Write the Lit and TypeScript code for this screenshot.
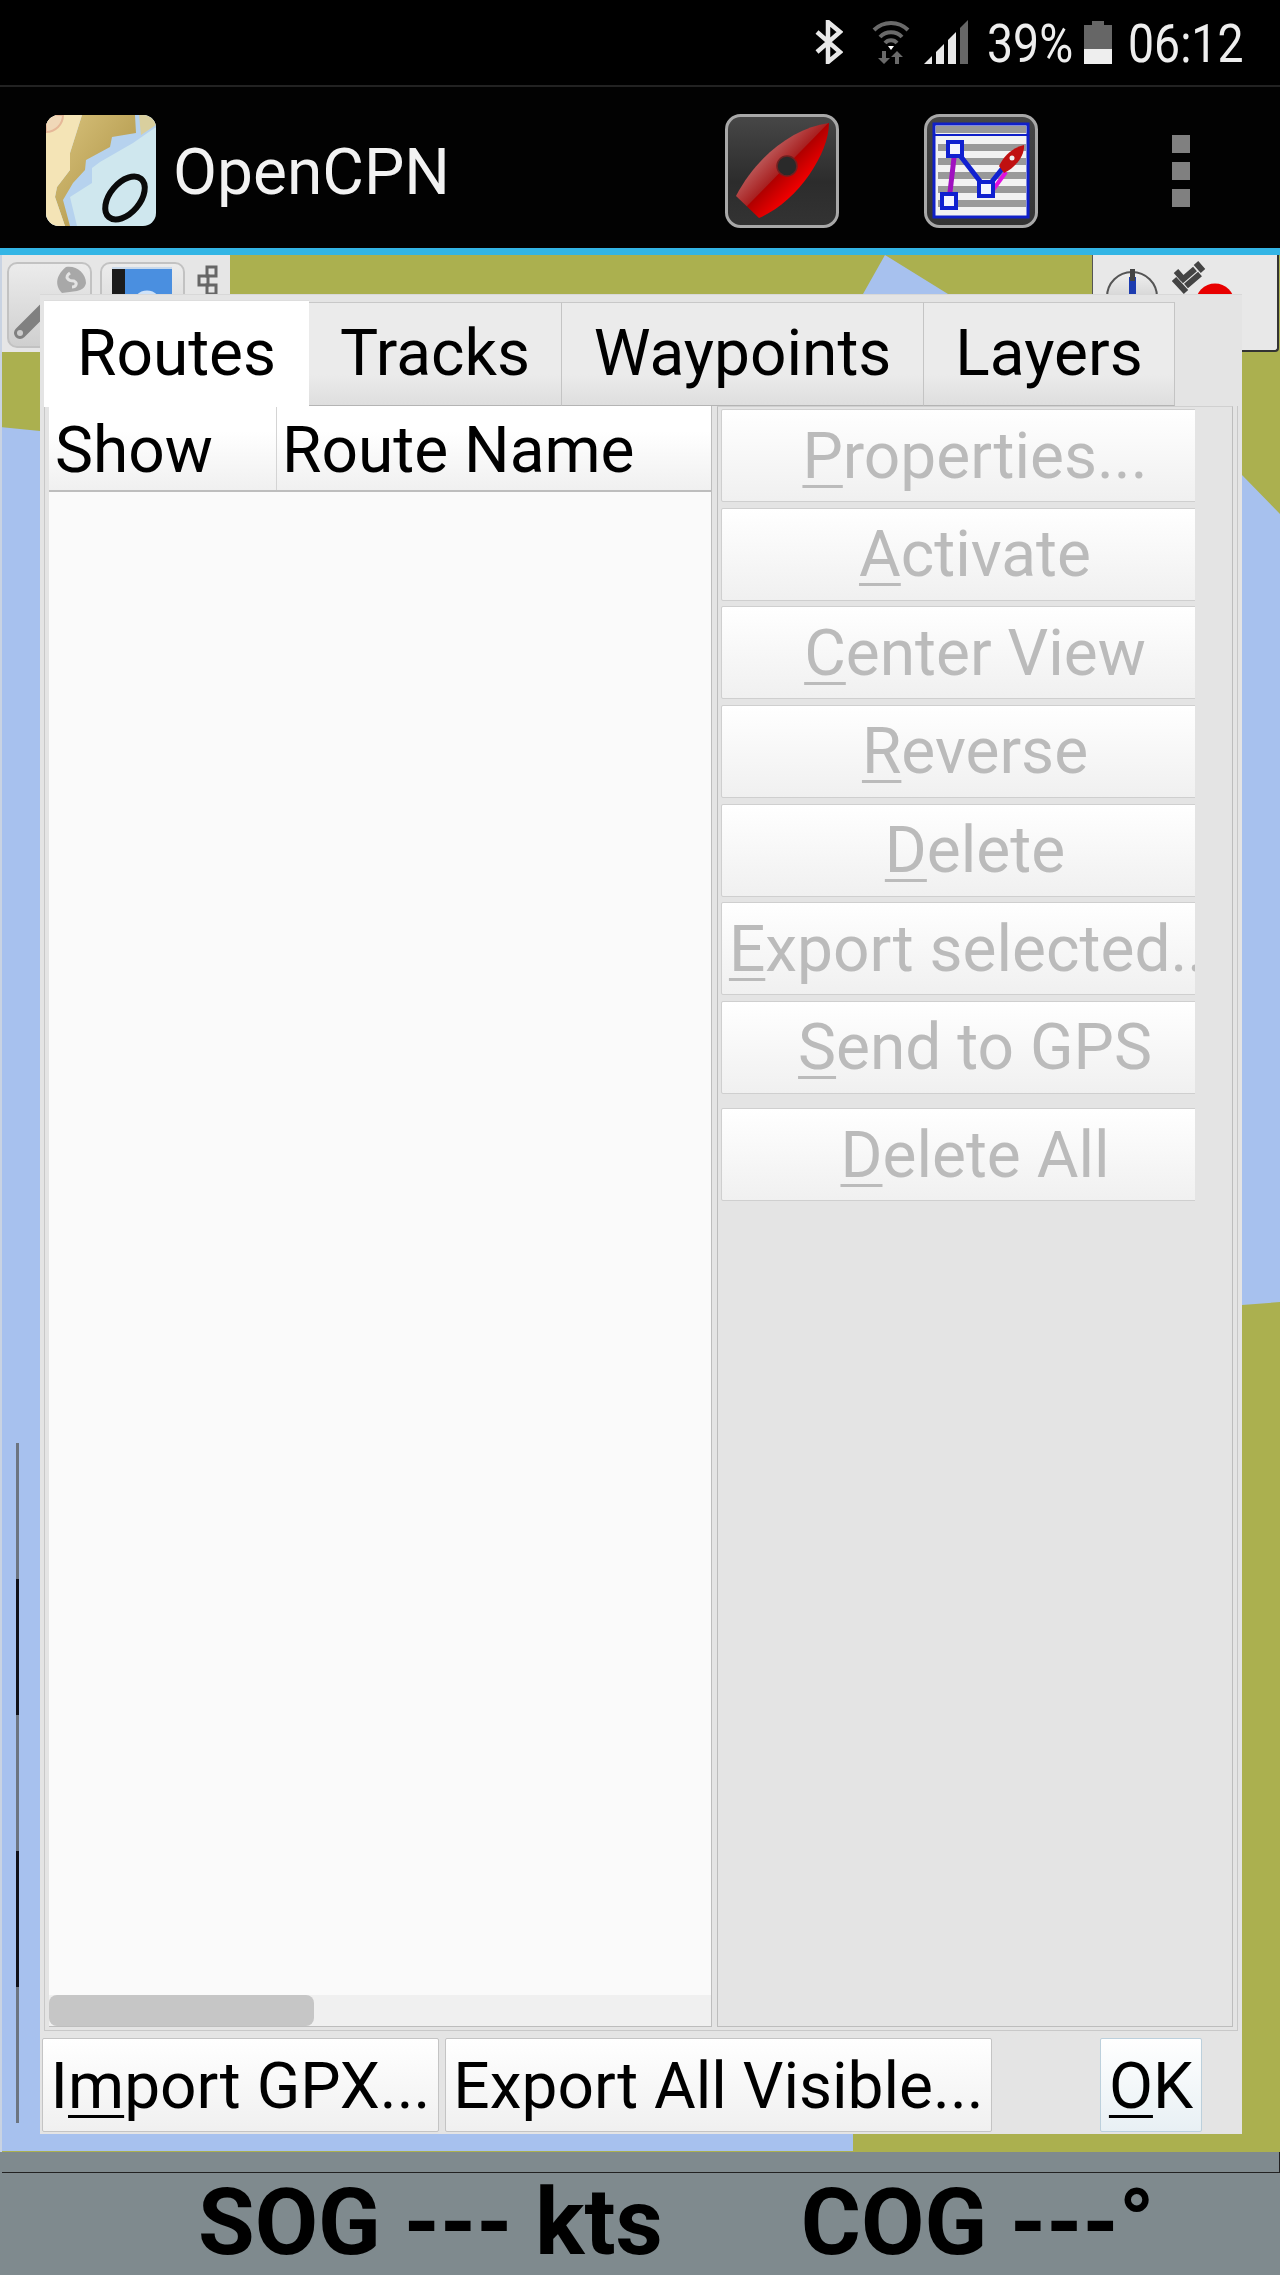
import { LitElement, html, svg, css } from "lit";
import { customElement } from "lit/decorators.js";

const sideButtons: [string, string][] = [
  ["P", "roperties..."],
  ["A", "ctivate"],
  ["C", "enter View"],
  ["R", "everse"],
  ["D", "elete"],
  ["E", "xport selected..."],
  ["S", "end to GPS"],
  ["D", "elete All"],
];

const stripes = [30, 44, 58, 72, 86];

@customElement("app-root")
export class AppRoot extends LitElement {
  static styles = css`
    :host { display: block; font-family: Roboto, "Liberation Sans", sans-serif; }
    .root { width: 1280px; height: 2275px; display: flex; flex-direction: column; overflow: hidden; background: #000; }
    .status { border-bottom: 2px solid #222; display: flex; align-items: flex-start; padding: 0 37px 0 815px; background: #000; color: #eee; flex: none; height: 85px; }
    .status svg { display: block; margin-top: 20px; flex: none; }
    .wifi { margin-left: 29px; }
    .signal { margin-left: 14px; }
    .pct, .time { font-size: 53px; line-height: 62px; margin-top: 13px; height: 62px; color: #eee; white-space: nowrap; }
    .pct span, .time span { display: inline-block; transform: scaleX(0.875); transform-origin: left center; }
    .pct { width: 85px; margin-left: 19px; }
    .batt { margin-left: 12px; }
    .time { width: 115px; margin-left: 16px; }
    .appbar { height: 161px; box-sizing: border-box; flex: none; background: #020202; display: flex; align-items: center; padding: 6px 0 0 46px; }
    .logo { width: 110px; height: 111px; display: block; flex: none; }
    .title { font-size: 64px; color: #f2f2f2; margin: 4px 0 0 17px; width: 552px; line-height: 72px; flex: none; }
    .tool { width: 114px; height: 114px; display: block; flex: none; }
    .tool.b { margin-left: 85px; }
    .dots { margin-left: 134px; display: flex; flex-direction: column; gap: 9px; }
    .dots i { display: block; width: 18px; height: 18px; background: #808080; }
    .accent { height: 7px; background: #33b5e5; flex: none; }
    .canvas { position: relative; flex: 1; background: #abb04f; overflow: hidden; }
    .map { position: absolute; left: 0; top: 0; width: 1280px; height: 1896px; display: block; }
    .edge { position: absolute; left: 0; top: 0; bottom: 0; width: 2px; background: #c9d3e2; }
    .scale { position: absolute; left: 16px; top: 1188px; width: 3px; display: flex; flex-direction: column; }
    .scale i { display: block; width: 100%; height: 136px; background: #6c7480; }
    .scale i.k { background: #101018; }
    .tb-left { position: absolute; left: 2px; top: 0; width: 228px; height: 97px; background: #e6e6e6; }
    .tb-left svg, .tb-right svg { display: block; width: 100%; height: 100%; }
    .tb-right { position: absolute; left: 1092px; top: 0; width: 184px; height: 95px; background: #e8e8e8; border-left: 1px solid #555; border-right: 2px solid #333; border-bottom: 2px solid #333; border-bottom-right-radius: 4px; }
    .dialog { position: absolute; left: 40px; top: 39px; width: 1202px; height: 1840px; box-sizing: border-box; background: #e4e4e4; padding-top: 5px; display: flex; flex-direction: column; border-top: 1px solid #d8d8d8; }
    .tabs { margin-left: 4px; height: 106px; flex: none; display: grid; grid-template-columns: 265px 253px 362px 251px; align-items: end; }
    .tab { height: 104px; box-sizing: border-box; padding-bottom: 2px; display: flex; align-items: center; justify-content: center; font-size: 64px; color: #000; background: linear-gradient(#ebebeb 70%, #dedede); border-top: 1px solid #c8c8c8; border-right: 1px solid #c4c4c4; border-bottom: 1px solid #b4b4b4; }
    .tab.on { height: 107px; background: #fff; border: none; border-top: 1px solid #ddd; position: relative; z-index: 1; margin-bottom: -1px; padding-bottom: 2px; }
    .page { margin-left: 4px; width: 1194px; height: 1625px; box-sizing: border-box; flex: none; border: 1px solid #c8c8c8; border-top: none; padding: 0 4px 3px 4px; display: grid; grid-template-columns: 663px 516px; column-gap: 5px; }
    .list { display: flex; flex-direction: column; background: #fafafa; border-right: 1px solid #bdbdbd; border-bottom: 1px solid #bdbdbd; min-height: 0; }
    .head { height: 86px; flex: none; display: grid; grid-template-columns: 227px 1fr; background: linear-gradient(#fff 30%, #f0f0f0); border-bottom: 2px solid #bdbdbd; box-sizing: border-box; }
    .head div { font-size: 64px; color: #000; display: flex; align-items: center; padding: 4px 0 0 6px; }
    .head div + div { border-left: 1px solid #d4d4d4; padding-left: 5px; }
    .rows { flex: 1; }
    .hbar { height: 31px; background: #f0f0f0; flex: none; }
    .hbar i { display: block; width: 265px; height: 31px; background: #c6c6c6; border-radius: 8px; }
    .side { border: 1px solid #bdbdbd; border-top: 1px solid #d0d0d0; padding: 2px 0 0 3px; display: flex; flex-direction: column; min-height: 0; }
    .clip { width: 474px; overflow: hidden; display: flex; flex-direction: column; gap: 5.67px; }
    .sb { width: 508px; height: 93px; flex: none; box-sizing: border-box; padding-top: 1px; display: flex; align-items: center; justify-content: center; font-size: 64px; color: #bbb; background: linear-gradient(#fff, #f0f0f0); border: 1px solid #cfcfcf; border-radius: 2px; white-space: nowrap; }
    .sb.last { margin-top: 8.5px; }
    u { text-decoration: underline; text-decoration-thickness: 3px; text-underline-offset: 7px; text-decoration-skip-ink: none; }
    .foot { flex: none; height: 94px; margin-top: 7px; display: flex; padding-left: 2px; padding-right: 40px; gap: 6px; }
    .fb { height: 94px; box-sizing: border-box; padding-top: 2px; display: flex; align-items: center; justify-content: center; font-size: 64px; color: #000; background: linear-gradient(#fff, #f0f0f0); border: 1px solid #c4c4c4; border-radius: 2px; white-space: nowrap; }
    .fb.i { width: 397px; }
    .fb.e { width: 547px; }
    .fb.ok { width: 102px; margin-left: auto; background: linear-gradient(#fff, #e8f0f4); border-color: #bcd0dc; }
    .band { flex: none; height: 123px; background: #7f8a8e; display: flex; flex-direction: column; }
    .strip { height: 20px; flex: none; margin-left: 2px; border-bottom: 1px solid #222; border-right: 1px solid #222; }
    .stats { flex: 1; display: flex; align-items: center; padding: 0 0 2px 198px; font-size: 92px; line-height: 92px; font-weight: 700; color: #000; gap: 138px; white-space: nowrap; }
  `;

  render() {
    return html`<div class="root">
      <div class="status">
        <svg width="28" height="44" viewBox="0 0 28 44"><path d="M2 12 L25 32 L13 42 V2 L25 12 L2 32" fill="none" stroke="#e8e8e8" stroke-width="4.5"/></svg>
        <svg class="wifi" width="38" height="44" viewBox="0 0 38 44">
          <g fill="none" stroke="#6a6a6a" stroke-width="4"><path d="M2 10 A24 24 0 0 1 36 10"/><path d="M8 17 A15 15 0 0 1 30 17"/><path d="M13 23 A8 8 0 0 1 25 23"/></g>
          <path d="M16 26 H22 L19 30Z" fill="#fff"/>
          <path d="M9 31 h4 v7 h4 l-6 6 l-6 -6 h4Z M26 44 h-4 v-7 h-4 l6 -6 l6 6 h-4 v7" transform="translate(1 0)" fill="#6a6a6a"/>
        </svg>
        <svg class="signal" width="44" height="44" viewBox="0 0 44 44">
          <path d="M0 44 L8 36 V44Z M12 44 V32 L20 24 V44Z M24 44 V20 L32 12 V44Z" fill="#e8e8e8"/>
          <path d="M36 44 V8 L44 0 V44Z" fill="#666"/>
        </svg>
        <div class="pct"><span>39%</span></div>
        <svg class="batt" width="28" height="44" viewBox="0 0 28 44">
          <path d="M8 1 H20 V5 H28 V29 H0 V5 H8Z" fill="#666"/><rect y="29" width="28" height="15" fill="#eee"/>
        </svg>
        <div class="time"><span>06:12</span></div>
      </div>

      <div class="appbar">
        <svg class="logo" viewBox="0 0 110 111">
          <defs>
            <clipPath id="lc"><rect width="110" height="111" rx="13"/></clipPath>
            <linearGradient id="tan" x1="0" y1="0" x2="1" y2="1"><stop offset="0" stop-color="#d8c27c"/><stop offset="1" stop-color="#a88d3e"/></linearGradient>
          </defs>
          <g clip-path="url(#lc)">
            <rect width="110" height="111" fill="#cfe7ee"/>
            <path d="M87 0 H110 V12 L87 28 L54 47 L46 53 L46 68 L24 82 L31 111 H0 V0Z" fill="#b6d2ee"/>
            <path d="M36 0 H89 L90 18 L66 22 L64 32 L40 45 L39 55 L27 68 L17 85 L24 111 H19 L9 82 L11 72 L24 55 L24 38Z" fill="url(#tan)"/>
            <path d="M0 0 H36 L24 38 L24 55 L11 72 L9 82 L19 111 H0Z" fill="#f4e4b6"/>
            <path d="M93 0 H110 V10 L95 20Z" fill="#d9cf9e"/>
            <path d="M0 0 H17 A17 17 0 0 1 0 17Z" fill="#f0d8b8" stroke="#e6b898" stroke-width="2"/>
            <ellipse cx="79" cy="83" rx="25" ry="15" transform="rotate(-50 79 83)" fill="none" stroke="#0a0a0a" stroke-width="6"/>
          </g>
        </svg>
        <div class="title">OpenCPN</div>
        <svg class="tool" viewBox="0 0 114 114">
          <defs>
            <linearGradient id="bg" x1="0" y1="0" x2="0" y2="1"><stop offset="0" stop-color="#474747"/><stop offset="0.6" stop-color="#2c2c2c"/><stop offset="1" stop-color="#333"/></linearGradient>
            <linearGradient id="red" x1="0.15" y1="0.15" x2="0.85" y2="0.85"><stop offset="0" stop-color="#d09090"/><stop offset="0.49" stop-color="#a82020"/><stop offset="0.5" stop-color="#b00000"/><stop offset="0.75" stop-color="#f00000"/><stop offset="1" stop-color="#a00000"/></linearGradient>
          </defs>
          <rect x="1.5" y="1.5" width="111" height="111" rx="14" fill="url(#bg)" stroke="#a8a8a8" stroke-width="3"/>
          <path d="M104 9 C104 40 72 88 34 104 L11 82 C32 42 68 14 104 9Z" fill="url(#red)"/>
          <circle cx="62" cy="52" r="10" fill="#2a2a2a" stroke="#702020" stroke-width="1.5"/>
        </svg>
        <svg class="tool b" viewBox="0 0 114 114">
          <defs><linearGradient id="bg2" x1="0" y1="0" x2="0" y2="1"><stop offset="0" stop-color="#474747"/><stop offset="1" stop-color="#333"/></linearGradient></defs>
          <rect x="1.5" y="1.5" width="111" height="111" rx="14" fill="url(#bg2)" stroke="#a8a8a8" stroke-width="3"/>
          <rect x="10" y="10" width="94" height="93" fill="#f2f2f2" stroke="#1020c8" stroke-width="3"/>
          <rect x="12" y="12" width="90" height="7" fill="#999"/>
          <rect x="11" y="20" width="92" height="2" fill="#1020c8"/>
          ${stripes.map((y) => svg`<rect x="14" y=${y} width="88" height="7" fill="#999"/>`)}
          <path d="M31 35 L25 87" stroke="#a010c0" stroke-width="5" fill="none"/>
          <path d="M31 35 L62 75 L86 45" stroke="#1020d0" stroke-width="5" fill="none"/>
          <path d="M66 80 L82 58" stroke="#e010e0" stroke-width="4" fill="none"/>
          <rect x="24" y="28" width="14" height="14" fill="#f4f4ff" stroke="#1020d0" stroke-width="4"/>
          <rect x="18" y="80" width="14" height="14" fill="#f4f4ff" stroke="#1020d0" stroke-width="4"/>
          <rect x="55" y="68" width="14" height="14" fill="#f4f4ff" stroke="#1020d0" stroke-width="4"/>
          <path d="M100 31 C101 42 90 55 80 59 L75 52 C80 42 88 34 100 31Z" fill="#c01010"/>
          <circle cx="88" cy="44" r="2.5" fill="#eee"/>
        </svg>
        <div class="dots"><i></i><i></i><i></i></div>
      </div>
      <div class="accent"></div>

      <div class="canvas">
        <svg class="map" viewBox="0 0 1280 1896">
          <polygon fill="#a7c1ee" points="0,172 40,176 863,39 885,0 948,39 1242,220 1280,259 1280,1047 1242,1050 853,1879 853,1896 0,1896"/>
        </svg>
        <div class="edge"></div>
        <div class="scale"><i></i><i class="k"></i><i></i><i class="k"></i><i></i></div>

        <div class="tb-left">
          <svg viewBox="0 0 228 97">
            <defs>
              <linearGradient id="bt" x1="0" y1="0" x2="0" y2="1"><stop offset="0" stop-color="#ececec"/><stop offset="1" stop-color="#cfcfcf"/></linearGradient>
            </defs>
            <rect x="6" y="8" width="83" height="84" rx="9" fill="url(#bt)" stroke="#c2c2c2" stroke-width="2"/>
            <rect x="99" y="8" width="83" height="84" rx="9" fill="url(#bt)" stroke="#c2c2c2" stroke-width="2"/>
            <path d="M18 78 L42 54" stroke="#808080" stroke-width="12" stroke-linecap="round"/>
            <circle cx="18" cy="78" r="3" fill="#ccc"/>
            <path d="M64 12 C52 22 54 32 60 38 C70 36 82 38 84 28 C84 18 74 10 64 12Z" fill="#a8a8a8"/>
            <path d="M68 18 C62 22 66 26 72 26 C76 28 74 32 70 32" fill="none" stroke="#e4e4e4" stroke-width="3"/>
            <rect x="110" y="14" width="60" height="40" fill="#4a8fe0"/>
            <rect x="110" y="14" width="13" height="40" fill="#1c1c1c"/>
            <rect x="110" y="12" width="60" height="2" fill="#c8d8ea"/>
            <circle cx="145" cy="50" r="12" fill="none" stroke="#cfe2f8" stroke-width="5"/>
            <g fill="none" stroke="#666" stroke-width="3">
              <rect x="205" y="12" width="9" height="9"/><rect x="197" y="21" width="9" height="9"/><rect x="205" y="30" width="9" height="9"/>
            </g>
          </svg>
        </div>
        <div class="tb-right">
          <svg viewBox="0 0 184 95">
            <defs><linearGradient id="cg" x1="0" y1="0" x2="0" y2="1"><stop offset="0" stop-color="#f0f0f0"/><stop offset="1" stop-color="#bdbdbd"/></linearGradient></defs>
            <circle cx="39" cy="42" r="25" fill="url(#cg)" stroke="#555" stroke-width="2"/>
            <rect x="36" y="22" width="7" height="34" fill="#1c3cb0"/>
            <rect x="37" y="14" width="5" height="12" fill="#444"/>
            <path d="M83 16 L90 24 M103 8 L110 16 M88 26 L102 14 M93 31 L107 19 M81 24 L93 37" stroke="#444" stroke-width="6" fill="none"/>
            <circle cx="122" cy="48" r="19.5" fill="#e80000"/>
          </svg>
        </div>

        <div class="dialog">
          <div class="tabs">
            <div class="tab on">Routes</div>
            <div class="tab">Tracks</div>
            <div class="tab">Waypoints</div>
            <div class="tab">Layers</div>
          </div>
          <div class="page">
            <div class="list">
              <div class="head"><div>Show</div><div>Route Name</div></div>
              <div class="rows"></div>
              <div class="hbar"><i></i></div>
            </div>
            <div class="side">
              <div class="clip">
                ${sideButtons.map(
                  ([k, rest], i) => html`<div class="sb ${i === 7 ? "last" : ""}"><span><u>${k}</u>${rest}</span></div>`
                )}
              </div>
            </div>
          </div>
          <div class="foot">
            <div class="fb i"><span>I<u>m</u>port GPX...</span></div>
            <div class="fb e">Export All Visible...</div>
            <div class="fb ok"><span><u>O</u>K</span></div>
          </div>
        </div>
      </div>

      <div class="band">
        <div class="strip"></div>
        <div class="stats"><span>SOG --- kts</span><span>COG ---°</span></div>
      </div>
    </div>`;
  }
}
